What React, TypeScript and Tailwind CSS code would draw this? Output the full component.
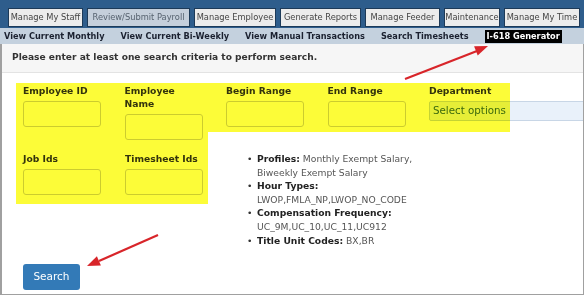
const tabs = [
  { label: 'Manage My Staff', w: 'w-[75px]' },
  { label: 'Review/Submit Payroll', w: 'w-[103px]', active: true },
  { label: 'Manage Employee', w: 'w-[82px]' },
  { label: 'Generate Reports', w: 'w-[81px]' },
  { label: 'Manage Feeder', w: 'w-[75px]' },
  { label: 'Maintenance', w: 'w-[56px]' },
  { label: 'Manage My Time', w: 'w-[76px]' },
];

const subLinks = [
  'View Current Monthly',
  'View Current Bi-Weekly',
  'View Manual Transactions',
  'Search Timesheets',
];

function Field({ label, multi }: { label: string; multi?: boolean }) {
  return (
    <div className="w-[78px] shrink-0 flex flex-col">
      <label className="text-[9.2px] font-bold text-[#333] leading-[13px] mb-[4px] whitespace-nowrap">
        {multi ? (
          <>
            Employee
            <br />
            Name
          </>
        ) : (
          label
        )}
      </label>
      <div className="h-[26px] rounded-[3px] border border-[#cfcfcf] bg-white" />
    </div>
  );
}

function Bullet({ children }: { children: React.ReactNode }) {
  return (
    <li className="flex">
      <span className="w-[10px] shrink-0 text-[#333]">•</span>
      <span className="whitespace-nowrap">{children}</span>
    </li>
  );
}

export default function App() {
  return (
    <div className="relative w-[584px] h-[295px] overflow-hidden bg-white font-['DejaVu_Sans',sans-serif]">
      {/* top menu */}
      <div className="h-[28px] bg-[#2e5d8c] flex items-start gap-[4px] pl-[8px] pt-[8px]">
        {tabs.map((t) => (
          <div
            key={t.label}
            className={`${t.w} shrink-0 h-[19px] flex items-center justify-center border border-[#1d3a58] text-[8.3px] whitespace-nowrap ${
              t.active ? 'bg-[#c5cfdb] text-[#56626f]' : 'bg-[#ececec] text-[#444]'
            }`}
          >
            {t.label}
          </div>
        ))}
      </div>

      {/* sub menu */}
      <div className="h-[16px] bg-[#c4d1de] flex items-center gap-[16px] pl-[4px] text-[8.2px] font-bold text-[#1b2130] whitespace-nowrap">
        {subLinks.map((s) => (
          <span key={s}>{s}</span>
        ))}
        <span className="bg-black text-white px-[2px] leading-[13px]">I-618 Generator</span>
      </div>

      {/* content */}
      <div className="h-[251px] overflow-hidden border-l-2 border-r border-b border-[#a0a0a0]">
        <div className="h-[29px] bg-[#f6f6f6] border-b border-[#e3e3e3] flex items-center pl-[10px] text-[9.1px] font-bold text-[#333] whitespace-nowrap">
          Please enter at least one search criteria to perform search.
        </div>

        <div className="pl-[21px] pt-[11px]">
          <div className="flex items-start gap-[23.5px]">
            <Field label="Employee ID" />
            <Field label="Employee Name" multi />
            <Field label="Begin Range" />
            <Field label="End Range" />
            <div className="flex flex-col shrink-0">
              <label className="text-[9.2px] font-bold text-[#333] leading-[13px] mb-[4px]">Department</label>
              <div className="w-[170px] h-[20px] border border-[#c8d6e6] bg-[#e9f1fa] rounded-[2px] flex items-center pl-[3px] text-[10.3px] text-[#3b6a34]">
                Select options
              </div>
            </div>
          </div>

          <div className="flex items-start mt-[12px]">
            <div className="flex gap-[24px]">
              <Field label="Job Ids" />
              <Field label="Timesheet Ids" />
            </div>
            <ul className="ml-[44px] text-[9.2px] leading-[13.6px] text-[#555]">
              <Bullet>
                <b className="text-[#222]">Profiles:</b> Monthly Exempt Salary,
                <br />
                Biweekly Exempt Salary
              </Bullet>
              <Bullet>
                <b className="text-[#222]">Hour Types:</b>
                <br />
                LWOP,FMLA_NP,LWOP_NO_CODE
              </Bullet>
              <Bullet>
                <b className="text-[#222]">Compensation Frequency:</b>
                <br />
                UC_9M,UC_10,UC_11,UC912
              </Bullet>
              <Bullet>
                <b className="text-[#222]">Title Unit Codes:</b> BX,BR
              </Bullet>
            </ul>
          </div>

          <button className="mt-[17px] w-[57px] h-[26px] rounded-[3px] bg-[#337ab7] text-white text-[10.5px]">
            Search
          </button>
        </div>
      </div>

      {/* yellow highlight annotation */}
      <div className="absolute left-[16px] top-[83px] w-[494px] h-[49px] bg-[#fcfc38] mix-blend-multiply" />
      <div className="absolute left-[16px] top-[132px] w-[192px] h-[72px] bg-[#fcfc38] mix-blend-multiply" />

      {/* red arrows */}
      <svg className="absolute inset-0 pointer-events-none" width="584" height="295">
        <line x1="405" y1="79" x2="477" y2="51" stroke="#d8252a" strokeWidth="2.2" />
        <polygon points="488,46 477.7,55.4 474.1,46.2" fill="#d8252a" />
        <line x1="158" y1="235" x2="99" y2="261" stroke="#d8252a" strokeWidth="2.2" />
        <polygon points="87,266 100.9,265.4 96.9,256.2" fill="#d8252a" />
      </svg>
    </div>
  );
}
